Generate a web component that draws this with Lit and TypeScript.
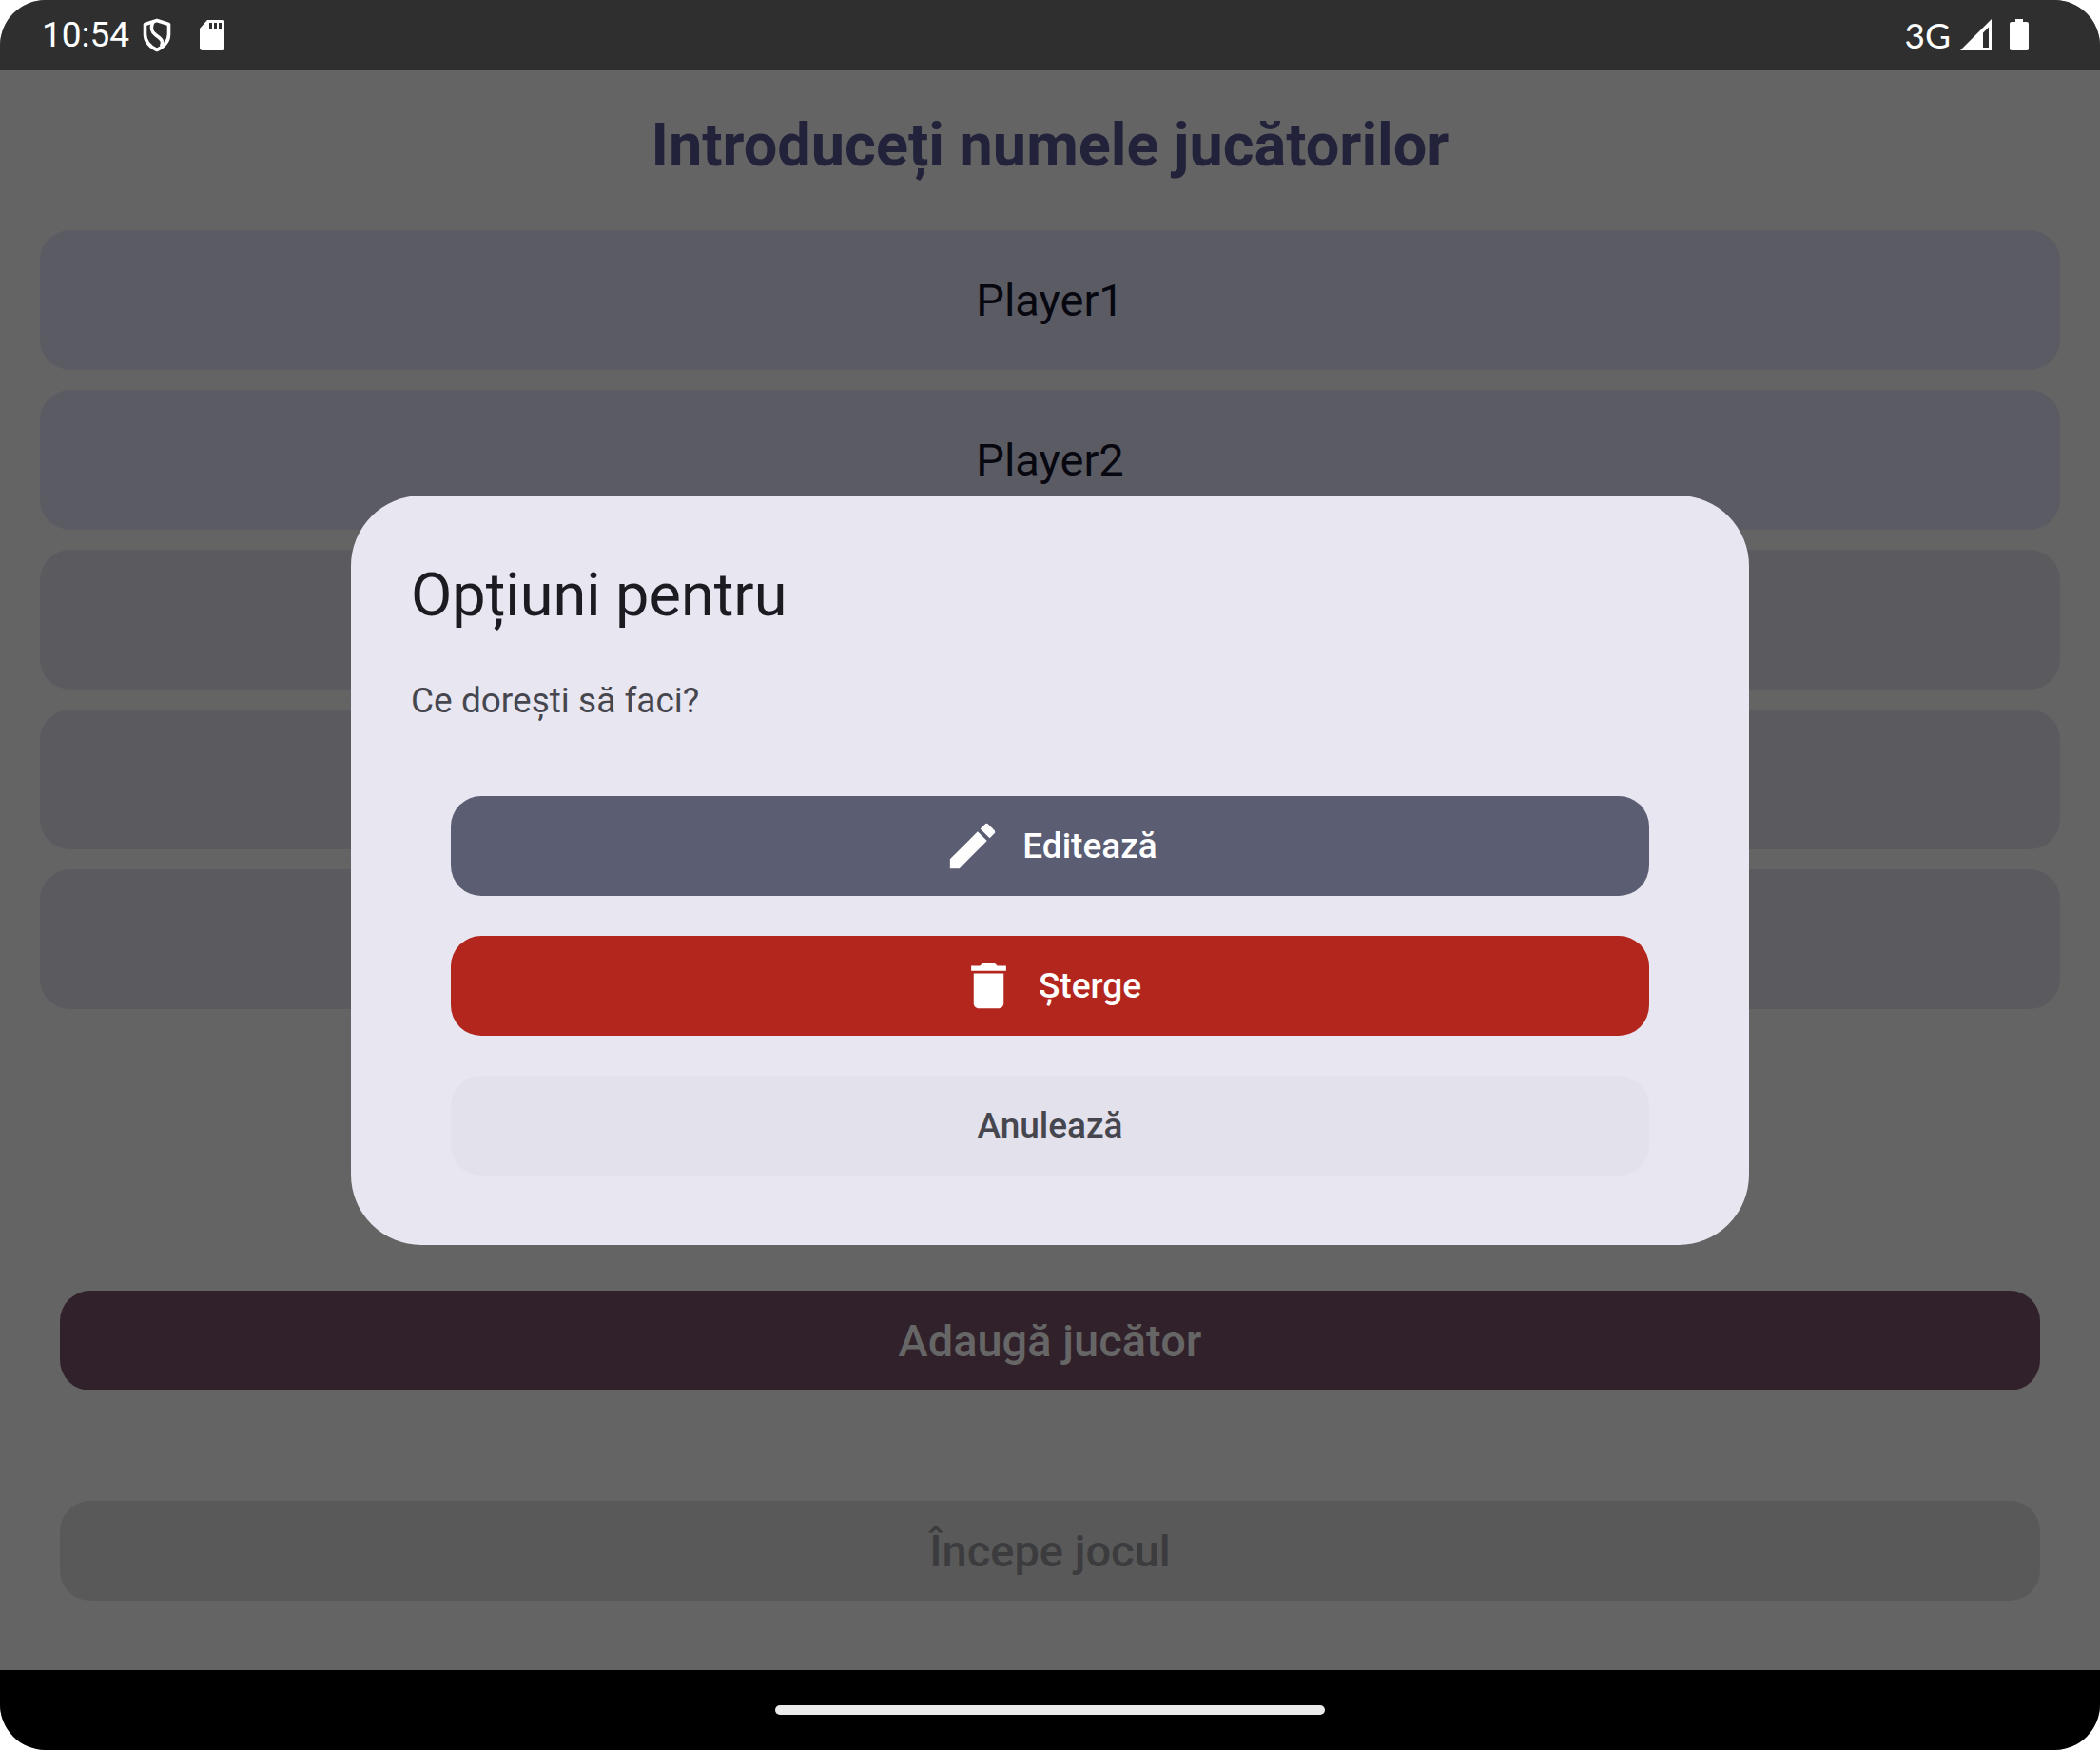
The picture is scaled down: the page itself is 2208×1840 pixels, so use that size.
import { LitElement, html, css, nothing, svg } from "lit";
import { customElement, state } from "lit/decorators.js";

const pencilIcon = html`<svg class="icon" viewBox="0 0 24 24" aria-hidden="true">
  <path d="M3 17.25V21h3.75L17.81 9.94l-3.75-3.75L3 17.25zM20.71 7.04a1 1 0 0 0 0-1.41l-2.34-2.34a1 1 0 0 0-1.41 0l-1.83 1.83 3.75 3.75 1.83-1.83z"/>
</svg>`;

const trashIcon = html`<svg class="icon" viewBox="0 0 24 24" aria-hidden="true">
  <path d="M6 19c0 1.1.9 2 2 2h8c1.1 0 2-.9 2-2V7H6v12zM19 4h-3.5l-1-1h-5l-1 1H5v2h14V4z"/>
</svg>`;

@customElement("status-bar")
export class StatusBar extends LitElement {
  static styles = css`
    :host {
      display: flex;
      align-items: center;
      justify-content: space-between;
      height: 74px;
      padding: 0 74px 0 44px;
      box-sizing: border-box;
      background: #2f2f2f;
      color: #fff;
      font: 400 37px/44px Roboto, "Liberation Sans", sans-serif;
    }
    .group { display: flex; align-items: center; }
    .network { font-family: Lato, Roboto, sans-serif; margin-right: 9px; }
    .shield { width: 32px; height: 36px; margin: 0 28px 0 13px; }
    .card { width: 28px; height: 34px; }
    .signal { width: 34px; height: 34px; margin-right: 18px; }
    .battery { width: 22px; height: 34px; }
  `;

  render() {
    return html`
      <div class="group">
        <span>10:54</span>
        <svg class="shield" viewBox="0 0 32 36" fill="none" stroke="#fff" stroke-width="3.6" stroke-linejoin="round">
          <path d="M16 2.500 28.500 6.500V17c0 8-5 13-12.500 16.500C8.500 30 3.500 25 3.500 17V6.500z"/>
          <path d="M12 4C9 10 9.500 14 15 18s8.500 6.500 5.500 12"/>
        </svg>
        <svg class="card" viewBox="0 0 28 34">
          <path fill="#fff" d="M9 1h15a3 3 0 0 1 3 3v26a3 3 0 0 1-3 3H4a3 3 0 0 1-3-3V10z"/>
          ${[11, 16, 21].map((x) => svg`<path fill="#2f2f2f" d="M${x} 4h3v7h-3z"/>`)}
        </svg>
      </div>
      <div class="group">
        <span class="network">3G</span>
        <svg class="signal" viewBox="0 0 34 34">
          <path fill="#fff" fill-rule="evenodd" d="M1 33 34 0v33zM25 30h6V8.500l-6 6z"/>
        </svg>
        <svg class="battery" viewBox="0 0 22 34" fill="#fff">
          <path d="M7 0h8v3h4a2 2 0 0 1 2 2v26a2 2 0 0 1-2 2H3a2 2 0 0 1-2-2V5a2 2 0 0 1 2-2h4z"/>
        </svg>
      </div>
    `;
  }
}

@customElement("options-dialog")
export class OptionsDialog extends LitElement {
  static styles = css`
    :host {
      position: absolute;
      inset: 0;
      display: flex;
      align-items: center;
      justify-content: center;
      padding-bottom: 10px;
      font-family: Roboto, "Liberation Sans", sans-serif;
    }
    .dialog {
      width: 1470px;
      max-width: calc(100% - 84px);
      box-sizing: border-box;
      padding: 63px 63px 73px;
      border-radius: 74px;
      background: #e8e6f0;
    }
    .title { margin: 0 0 42px; font-size: 63px; font-weight: 400; line-height: 84px; color: #1b1b21; }
    .message { margin: 0 0 74px; font-size: 37px; line-height: 53px; color: #46464f; }
    .actions { display: flex; flex-direction: column; gap: 42px; padding: 0 42px; }
    .action {
      display: flex;
      align-items: center;
      justify-content: center;
      gap: 21px;
      height: 105px;
      padding: 0;
      border: 0;
      border-radius: 32px;
      font: 500 37px/53px Roboto, "Liberation Sans", sans-serif;
      color: #fff;
    }
    .edit { background: #5b5d72; }
    .remove { background: #b3261e; }
    .cancel { background: #e2e1ec; color: #46464f; }
    .icon { width: 63px; height: 63px; fill: currentColor; }
  `;

  private close() {
    this.dispatchEvent(new CustomEvent("dismiss"));
  }

  render() {
    return html`
      <section class="dialog" role="dialog" aria-modal="true" aria-labelledby="title">
        <h2 class="title" id="title">Opțiuni pentru</h2>
        <p class="message">Ce dorești să faci?</p>
        <div class="actions">
          <button class="action edit" type="button">${pencilIcon}Editează</button>
          <button class="action remove" type="button">${trashIcon}Șterge</button>
          <button class="action cancel" type="button" @click=${this.close}>Anulează</button>
        </div>
      </section>
    `;
  }
}

@customElement("app-root")
export class AppRoot extends LitElement {
  static styles = css`
    :host { display: block; background: #fff; font-family: Roboto, "Liberation Sans", sans-serif; }
    .screen {
      position: relative;
      display: flex;
      flex-direction: column;
      min-height: 100vh;
      border-radius: 48px;
      overflow: hidden;
      background: #646464;
    }
    .content { flex: 1; display: flex; flex-direction: column; padding: 37px 42px 73px; }
    .heading { margin: 0 0 47px; font-size: 63px; font-weight: 700; line-height: 84px; text-align: center; color: #22233b; }
    .players { display: flex; flex-direction: column; gap: 21px; margin: 0; padding: 0; list-style: none; }
    .player {
      display: flex;
      align-items: center;
      justify-content: center;
      height: 147px;
      border-radius: 32px;
      background: #5b5a5f;
      color: #07070f;
      font-size: 47px;
      line-height: 63px;
    }
    .named { background: #5b5b64; }
    .footer { display: flex; flex-direction: column; gap: 116px; margin-top: auto; padding: 0 21px; }
    .wide {
      height: 105px;
      padding: 0;
      border: 0;
      border-radius: 32px;
      font: 500 47px/63px Roboto, "Liberation Sans", sans-serif;
    }
    .add { background: #31212b; color: #666; }
    .start { background: #595959; color: #3c3c3e; }
    .navigation { display: flex; align-items: center; justify-content: center; height: 84px; background: #000; }
    .handle { width: 578px; height: 10px; border-radius: 5px; background: #ebebeb; }
  `;

  @state() private dialogOpen = true;
  @state() private players = ["Player1", "Player2", "", "", ""];

  render() {
    return html`
      <div class="screen">
        <status-bar></status-bar>
        <main class="content">
          <h1 class="heading">Introduceți numele jucătorilor</h1>
          <ul class="players">
            ${this.players.map((name) => html`<li class="player ${name ? "named" : ""}">${name}</li>`)}
          </ul>
          <div class="footer">
            <button class="wide add" type="button">Adaugă jucător</button>
            <button class="wide start" type="button" disabled>Începe jocul</button>
          </div>
        </main>
        <div class="navigation"><div class="handle"></div></div>
        ${this.dialogOpen
          ? html`<options-dialog @dismiss=${() => (this.dialogOpen = false)}></options-dialog>`
          : nothing}
      </div>
    `;
  }
}
